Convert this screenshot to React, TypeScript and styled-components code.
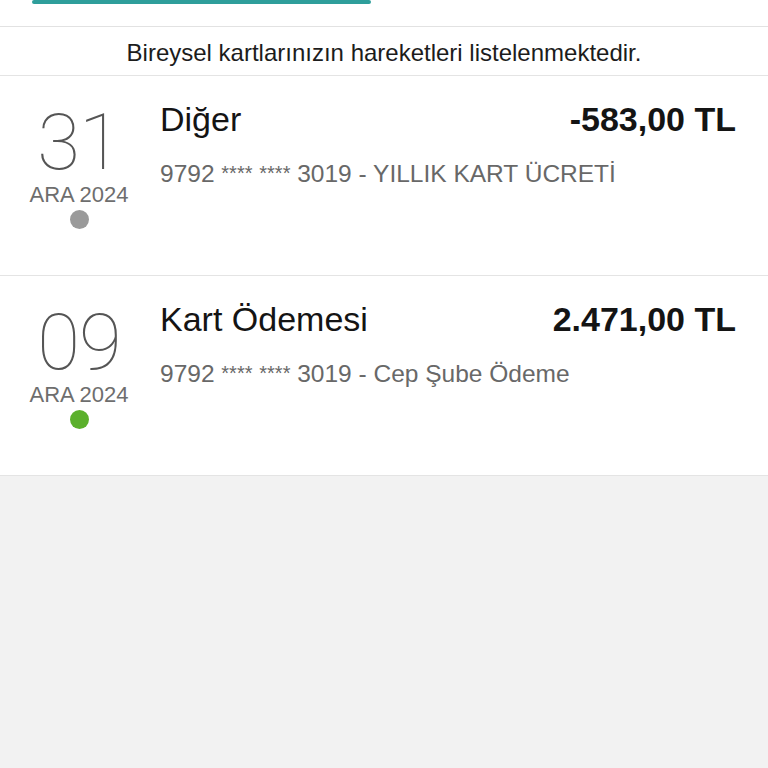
import React from "react";
import styled, { createGlobalStyle } from "styled-components";

interface Movement {
  day: string;
  month: string;
  title: string;
  amount: string;
  card: string;
  detail: string;
  status: "pending" | "done";
}

const movements: Movement[] = [
  {
    day: "31",
    month: "ARA 2024",
    title: "Diğer",
    amount: "-583,00 TL",
    card: "9792",
    detail: "3019 - YILLIK KART ÜCRETİ",
    status: "pending",
  },
  {
    day: "09",
    month: "ARA 2024",
    title: "Kart Ödemesi",
    amount: "2.471,00 TL",
    card: "9792",
    detail: "3019 - Cep Şube Ödeme",
    status: "done",
  },
];

const GlobalStyle = createGlobalStyle`
  html, body {
    margin: 0;
    padding: 0;
    background: #f2f2f2;
    font-family: "Liberation Sans", Arial, sans-serif;
  }
`;

const App: React.FC = () => {
  return (
    <>
      <GlobalStyle />
      <Page>
        <Header>
          <Segmented>
            <SegmentField />
            <SegmentButton />
          </Segmented>
        </Header>
        <InfoBar>Bireysel kartlarınızın hareketleri listelenmektedir.</InfoBar>
        {movements.map((m) => (
          <Row key={m.day + m.title}>
            <DateCol>
              <Day>{m.day}</Day>
              <Month>{m.month}</Month>
              <Dot status={m.status} />
            </DateCol>
            <Body>
              <TopLine>
                <Title>{m.title}</Title>
                <Amount>{m.amount}</Amount>
              </TopLine>
              <Detail>
                {m.card} <Stars>****</Stars> <Stars>****</Stars> {m.detail}
              </Detail>
            </Body>
          </Row>
        ))}
      </Page>
    </>
  );
};

const Page = styled.div`
  display: flex;
  flex-flow: column nowrap;
  min-height: 768px;
  background: #f2f2f2;
`;

const Header = styled.div`
  height: 26px;
  background: white;
  overflow: hidden;
  display: flex;
  flex-flow: column nowrap;
  justify-content: flex-end;
  padding: 0 0 0 32px;
  border-bottom: 1px solid #e2e2e2;
`;

const Segmented = styled.div`
  display: flex;
  width: 339px;
  height: 40px;
  margin-bottom: 22px;
  border: 2px solid #2e9e9b;
  border-radius: 9px;
  box-sizing: border-box;
  overflow: hidden;
`;

const SegmentField = styled.div`
  flex: 1;
  background: white;
`;

const SegmentButton = styled.div`
  width: 54px;
  background: #2e9e9b;
`;

const InfoBar = styled.div`
  height: 49px;
  background: white;
  display: flex;
  align-items: center;
  justify-content: center;
  padding-top: 3px;
  box-sizing: border-box;
  font-size: 24px;
  color: #1c1c1c;
  border-bottom: 1px solid #e4e4e4;
`;

const Row = styled.div`
  height: 199px;
  background: white;
  border-bottom: 1px solid #e4e4e4;
  display: flex;
  flex-flow: row nowrap;
  padding: 0 32px 0 24px;
`;

const DateCol = styled.div`
  width: 110px;
  display: flex;
  flex-flow: column nowrap;
  align-items: center;
  padding-top: 36px;
`;

const Day = styled.div`
  font-family: "Roboto", sans-serif;
  font-weight: 100;
  font-size: 78px;
  line-height: 62px;
  color: #555;
  letter-spacing: -1px;
`;

const Month = styled.div`
  font-size: 22px;
  line-height: 24px;
  color: #6e6e6e;
  margin-top: 9px;
`;

const Dot = styled.span<{ status: "pending" | "done" }>`
  width: 19px;
  height: 19px;
  border-radius: 50%;
  margin-top: 3px;
  background: ${({ status }) => (status === "done" ? "#5bb02c" : "#9a9a9a")};
`;

const Body = styled.div`
  flex: 1;
  padding-left: 26px;
  padding-top: 23px;
  display: flex;
  flex-flow: column nowrap;
`;

const TopLine = styled.div`
  display: flex;
  justify-content: space-between;
  align-items: baseline;
`;

const Title = styled.div`
  font-size: 34px;
  line-height: 40px;
  color: #141414;
`;

const Amount = styled.div`
  font-size: 34px;
  line-height: 40px;
  font-weight: bold;
  color: #141414;
`;

const Detail = styled.div`
  margin-top: 20px;
  font-size: 24.5px;
  line-height: 28px;
  color: #686868;
`;

const Stars = styled.span`
  font-size: 20px;
  vertical-align: 2px;
`;

export default App;
